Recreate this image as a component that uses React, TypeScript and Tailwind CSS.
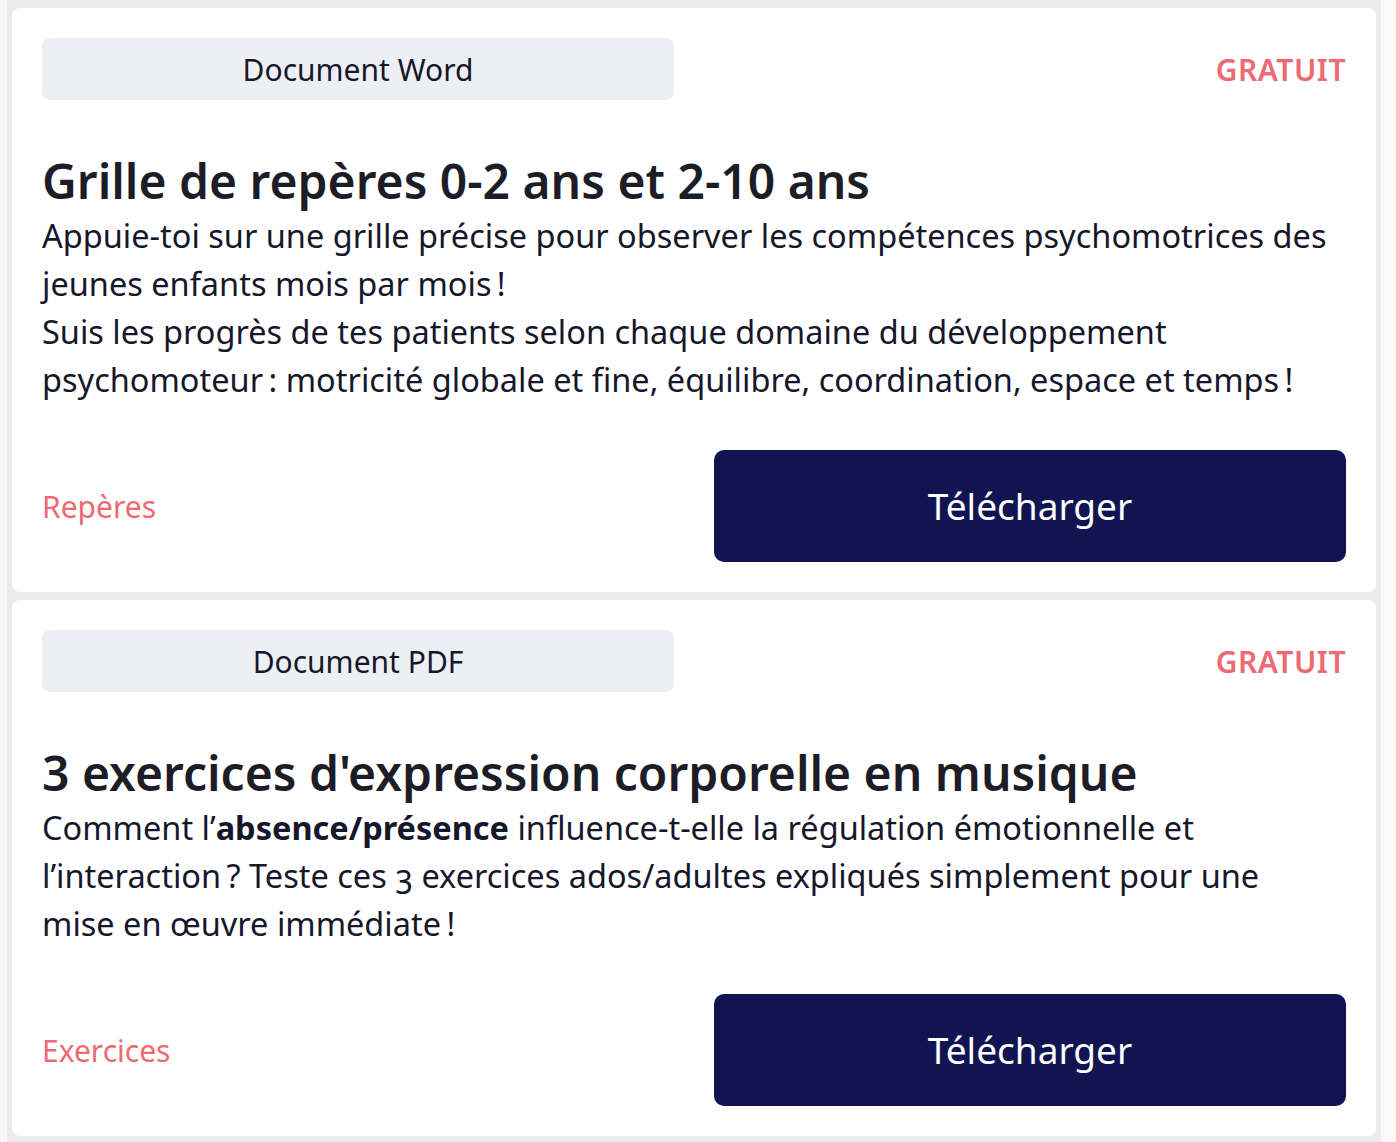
import React from "react";

const font = { fontFamily: '"Noto Sans", "Open Sans", sans-serif' };

type CardProps = {
  badge: string;
  title: string;
  body: React.ReactNode;
  tag: string;
};

function Card({ badge, title, body, tag }: CardProps) {
  return (
    <div className="bg-white rounded-[8px] px-[30px] pt-[30px] pb-[30px]">
      <div className="grid grid-cols-2 gap-[40px] items-center">
        <div className="h-[62px] rounded-[8px] bg-[#eeeff4] flex items-center justify-center text-[30px] text-[#16172b]">
          {badge}
        </div>
        <div className="text-right text-[30px] font-semibold text-[#ee6a73] tracking-[0.5px]">
          GRATUIT
        </div>
      </div>
      <h2 className="mt-[50px] text-[48px] leading-[62px] font-semibold text-[#1c1d26]">
        {title}
      </h2>
      <div className="text-[32.5px] leading-[48px] text-[#16172b] oldstyle-nums whitespace-nowrap">{body}</div>
      <div className="mt-[46px] grid grid-cols-2 gap-[40px] items-center">
        <div className="text-[30px] text-[#ee6a73]">{tag}</div>
        <button className="h-[112px] rounded-[10px] bg-[#121452] text-white text-[37px] flex items-center justify-center">
          Télécharger
        </button>
      </div>
    </div>
  );
}

export default function App() {
  return (
    <div className="min-h-[1142px] bg-[#fbf9f8] overflow-hidden" style={font}>
      <div className="ml-[7px] w-[1374px] bg-[#ecebeb] px-[5px] pt-[8px] pb-[8px] flex flex-col gap-[8px]">
        <Card
          badge="Document Word"
          title="Grille de repères 0-2 ans et 2-10 ans"
          body={
            <>
              Appuie-toi sur une grille précise pour observer les compétences psychomotrices des
              <br />
              jeunes enfants mois par mois{"\u202F"}!
              <br />
              Suis les progrès de tes patients selon chaque domaine du développement
              <br />
              psychomoteur{"\u202F"}: motricité globale et fine, équilibre, coordination, espace et temps{"\u202F"}!
            </>
          }
          tag="Repères"
        />
        <Card
          badge="Document PDF"
          title="3 exercices d'expression corporelle en musique"
          body={
            <>
              Comment l’<strong className="font-bold">absence/présence</strong> influence-t-elle la régulation émotionnelle et
              <br />
              l’interaction{"\u202F"}? Teste ces 3 exercices ados/adultes expliqués simplement pour une
              <br />
              mise en œuvre immédiate{"\u202F"}!
            </>
          }
          tag="Exercices"
        />
      </div>
    </div>
  );
}
